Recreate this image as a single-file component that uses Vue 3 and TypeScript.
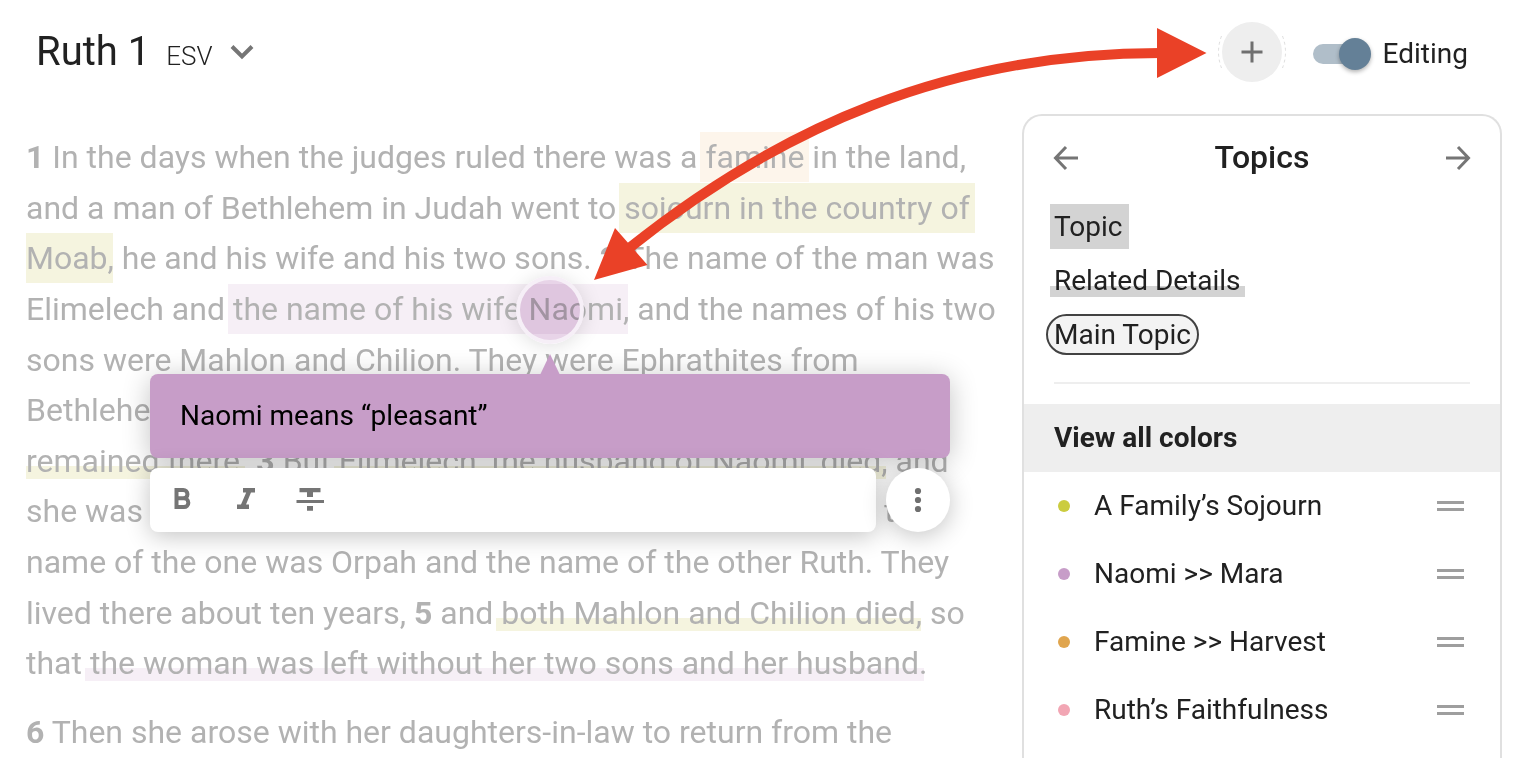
<script setup lang="ts">
import { ref } from 'vue'

type Kind = 'plain' | 'verse' | 'topic' | 'detail'
type Hue = 'olive' | 'orange' | 'purple'

interface Segment {
  text: string
  kind?: Kind
  hue?: Hue
}

type Line = Segment[]

const paragraphs: Line[][] = [
  [
    [
      { text: '1', kind: 'verse' },
      { text: ' In the days when the judges ruled there was a ' },
      { text: 'famine', kind: 'topic', hue: 'orange' },
      { text: ' in the land,' },
    ],
    [
      { text: 'and a man of Bethlehem in Judah went to ' },
      { text: 'sojourn in the country of', kind: 'topic', hue: 'olive' },
    ],
    [
      { text: 'Moab', kind: 'topic', hue: 'olive' },
      { text: ', he and his wife and his two sons. ' },
      { text: '2', kind: 'verse' },
      { text: ' The name of the man was' },
    ],
    [
      { text: 'Elimelech and ' },
      { text: 'the name of his wife Naomi', kind: 'topic', hue: 'purple' },
      { text: ', and the names of his two' },
    ],
    [{ text: 'sons were Mahlon and Chilion. They were Ephrathites from' }],
    [{ text: 'Bethlehem in Judah. They went into the country of Moab and' }],
    [
      { text: 'remained there', kind: 'detail', hue: 'olive' },
      { text: '. ' },
      { text: '3', kind: 'verse' },
      { text: ' But ' },
      { text: 'Elimelech, the husband of Naomi, died', kind: 'detail', hue: 'olive' },
      { text: ', and' },
    ],
    [
      { text: 'she was left with her two sons. ' },
      { text: '4', kind: 'verse' },
      { text: ' These took Moabite wives; the' },
    ],
    [{ text: 'name of the one was Orpah and the name of the other Ruth. They' }],
    [
      { text: 'lived there about ten years, ' },
      { text: '5', kind: 'verse' },
      { text: ' and ' },
      { text: 'both Mahlon and Chilion died', kind: 'detail', hue: 'olive' },
      { text: ', so' },
    ],
    [
      { text: 'that ' },
      { text: 'the woman was left without her two sons and her husband', kind: 'detail', hue: 'purple' },
      { text: '.' },
    ],
  ],
  [
    [
      { text: '6', kind: 'verse' },
      { text: ' Then she arose with her daughters-in-law to return from the' },
    ],
  ],
]

const topics = [
  { name: 'A Family’s Sojourn', tone: 'lime' },
  { name: 'Naomi >> Mara', tone: 'mauve' },
  { name: 'Famine >> Harvest', tone: 'amber' },
  { name: 'Ruth’s Faithfulness', tone: 'pink' },
]

const editing = ref(true)
</script>

<template>
  <div class="page">
    <header class="bar">
      <button class="passage" type="button">
        <span class="book">Ruth 1</span>
        <span class="version">ESV</span>
        <svg class="chevron" width="24" height="16" viewBox="0 0 24 16" aria-hidden="true">
          <path d="M2 2.5 12 12.5 22 2.5" fill="none" stroke="#757575" stroke-width="4" />
        </svg>
      </button>
      <div class="actions">
        <button class="add" type="button" aria-label="Add">
          <svg width="68" height="60" viewBox="0 0 68 60" aria-hidden="true">
            <circle cx="34" cy="30" r="30" fill="#eeeeee" />
            <path d="M34 19.5v21M23.500 30h21" fill="none" stroke="#6f6f6f" stroke-width="3" />
            <path d="M3.500 14Q-2.500 30 3.500 46M64.500 14Q70.500 30 64.500 46" fill="none" stroke="#dedede" stroke-width="1" stroke-dasharray="3 3" />
          </svg>
        </button>
        <label class="switch">
          <input v-model="editing" type="checkbox" />
          <span class="track"></span>
          <span>Editing</span>
        </label>
      </div>
    </header>

    <main class="content">
      <article class="reader">
        <p v-for="(lines, p) in paragraphs" :key="p">
          <span v-for="(line, l) in lines" :key="l" class="line"><span v-for="(seg, s) in line" :key="s" :class="[seg.kind, seg.hue]">{{ seg.text }}</span></span>
        </p>
      </article>

      <aside class="panel">
        <div class="panel-head">
          <button type="button" aria-label="Previous">
            <svg width="28" height="28" viewBox="0 0 28 28" aria-hidden="true">
              <path d="M26 14H4M14 3 3.500 14 14 25" fill="none" stroke="#757575" stroke-width="3" />
            </svg>
          </button>
          <h2>Topics</h2>
          <button type="button" aria-label="Next">
            <svg width="28" height="28" viewBox="0 0 28 28" aria-hidden="true">
              <path d="M2 14h22M14 3l10.500 11L14 25" fill="none" stroke="#757575" stroke-width="3" />
            </svg>
          </button>
        </div>
        <div class="styles">
          <button class="style-topic" type="button">Topic</button>
          <button class="style-detail" type="button">Related Details</button>
          <button class="style-main" type="button">Main Topic</button>
        </div>
        <button class="view-all" type="button">View all colors</button>
        <ul>
          <li v-for="topic in topics" :key="topic.name">
            <span class="dot" :class="topic.tone"></span>
            <span class="name">{{ topic.name }}</span>
            <span class="grip"></span>
          </li>
        </ul>
      </aside>
    </main>

    <div class="marker"><span class="marker-fill"></span></div>

    <div class="note">
      <div class="note-text">Naomi means “pleasant”</div>
      <div class="tools">
        <div class="formats">
          <button type="button" aria-label="Bold">
            <svg width="40" height="40" viewBox="0 0 40 40" aria-hidden="true">
              <path d="M14.500 10h6.800a4 4 0 0 1 0 8.300h-6.800M14.500 18.300h7.500a4.300 4.300 0 0 1 0 8.700h-7.500" fill="none" stroke="#757575" stroke-width="4" />
              <path d="M14.500 8v21" stroke="#757575" stroke-width="4" />
            </svg>
          </button>
          <button type="button" aria-label="Italic">
            <svg width="40" height="40" viewBox="0 0 40 40" aria-hidden="true">
              <path d="M17 8h12v4.500h-4L20 24.500h3v4.500H11v-4.500h4L20.200 12.500H17z" fill="#757575" />
            </svg>
          </button>
          <button type="button" aria-label="Strikethrough">
            <svg width="40" height="40" viewBox="0 0 40 40" aria-hidden="true">
              <path d="M9.500 8h21v4.300h-7.500v4.700h-6v-4.700h-7.500zM6.500 20h27.500v3h-27.500zM17 26h6v4.700h-6z" fill="#757575" />
            </svg>
          </button>
        </div>
        <button class="more" type="button" aria-label="More options">
          <svg width="8" height="26" viewBox="0 0 8 26" aria-hidden="true">
            <g fill="#6f6f6f">
              <circle cx="4" cy="4" r="3.100" />
              <circle cx="4" cy="13" r="3.100" />
              <circle cx="4" cy="22" r="3.100" />
            </g>
          </svg>
        </button>
      </div>
    </div>

    <svg class="arrow" width="640" height="280" viewBox="580 10 640 280" aria-hidden="true">
      <path d="M628 249C780 127 950 53 1160 53" fill="none" stroke="#ea4127" stroke-width="10" />
      <path d="M1157 28v50l49.500-25zM594 280l21-52 32.500 37z" fill="#ea4127" />
    </svg>
  </div>
</template>

<style>
body {
  margin: 0;
  background: #fff;
}
</style>

<style scoped>
* {
  box-sizing: border-box;
}

.page {
  position: relative;
  display: flex;
  flex-direction: column;
  height: 100vh;
  overflow: hidden;
  background: #fff;
  color: #212121;
  font-family: Roboto, "Liberation Sans", sans-serif;
  font-size: 28px;
}

button {
  padding: 0;
  border: 0;
  background: none;
  color: inherit;
  font: inherit;
  cursor: pointer;
}

.bar {
  display: flex;
  justify-content: space-between;
  align-items: center;
  padding: 22px 56px 32px 36px;
}

.passage {
  display: flex;
  align-items: baseline;
}

.book {
  font-size: 40px;
  line-height: 48px;
}

.version {
  margin: 0 18px 0 16px;
  font-size: 26px;
  font-weight: 300;
}

.chevron {
  align-self: center;
}

.actions {
  display: flex;
  align-items: center;
  gap: 27px;
}

.add {
  display: flex;
}

.switch {
  display: flex;
  align-items: center;
  gap: 12px;
  padding-top: 3px;
  cursor: pointer;
}

.switch input {
  position: absolute;
  opacity: 0;
}

.track {
  position: relative;
  width: 58px;
  height: 20px;
  border-radius: 10px;
  background: linear-gradient(#b0bec9, #b0bec9) left / 48px 100% no-repeat;
}

.track::after {
  content: "";
  position: absolute;
  top: -6px;
  left: 0;
  width: 32px;
  height: 32px;
  border-radius: 50%;
  background: #648097;
  box-shadow: 0 2px 4px rgba(0, 0, 0, 0.3);
}

input:checked + .track::after {
  left: 26px;
}

.content {
  display: flex;
  flex: 1;
  min-height: 0;
  padding: 0 22px 0 26px;
}

.reader {
  flex: 1;
  min-width: 0;
  padding-top: 18px;
  color: #b2b2b2;
  font-size: 32px;
  line-height: 1.583;
}

.reader p {
  margin: 0 0 18px;
}

.line {
  display: block;
  white-space: pre;
}

.verse {
  font-weight: 700;
}

.topic,
.detail {
  margin: 0 -5px;
  padding: 6px 5px;
}

.line > .topic:first-child,
.line > .detail:first-child {
  margin-left: 0;
  padding-left: 0;
}

.topic.orange {
  background: #fdf5eb;
}

.topic.olive {
  background: #f5f4df;
}

.topic.purple {
  background: #f6eff6;
}

.detail.olive {
  background: linear-gradient(#f5f4df, #f5f4df) 0 30px / 100% 13px no-repeat;
}

.detail.purple {
  background: linear-gradient(#f6eff6, #f6eff6) 0 30px / 100% 13px no-repeat;
}

.panel {
  width: 480px;
  border: 2px solid #e0e0e0;
  border-bottom: 0;
  border-radius: 20px 20px 0 0;
}

.panel-head {
  display: flex;
  justify-content: space-between;
  align-items: center;
  height: 84px;
  padding: 0 28px;
}

.panel-head button {
  display: flex;
}

h2 {
  margin: 0;
  padding-bottom: 2px;
  font-size: 32px;
  font-weight: 500;
}

.styles {
  display: flex;
  flex-direction: column;
  align-items: flex-start;
  margin: 4px 30px 20px;
  padding-bottom: 27px;
  border-bottom: 2px solid #eeeeee;
}

.styles button {
  margin-left: -4px;
  line-height: 45px;
}

.styles .style-topic {
  padding: 0 6px 0 4px;
  background: #d3d3d3;
}

.styles .style-detail {
  margin-top: 9px;
  padding: 0 4px;
  background: linear-gradient(#d3d3d3, #d3d3d3) 0 28px / 100% 11px no-repeat;
}

.styles .style-main {
  margin: 11px 0 0 -8px;
  padding: 0 6px;
  border: 2px solid #424242;
  border-radius: 21px;
  background: #f3f3f3;
  line-height: 37px;
}

.view-all {
  display: block;
  width: 100%;
  padding: 0 30px;
  background: #eeeeee;
  font-weight: 700;
  line-height: 68px;
  text-align: left;
}

ul {
  margin: 0;
  padding: 0;
  list-style: none;
}

li {
  display: flex;
  align-items: center;
  height: 68px;
  padding: 0 36px 0 34px;
}

.dot {
  width: 12px;
  height: 12px;
  margin-right: 24px;
  border-radius: 50%;
}

.lime {
  background: #cbcc3f;
}

.mauve {
  background: #c79dc8;
}

.amber {
  background: #e0a54e;
}

.pink {
  background: #f2a6b4;
}

.name {
  flex: 1;
  padding-bottom: 2px;
}

.grip {
  width: 27px;
  height: 10px;
  border-top: 3px solid #9e9e9e;
  border-bottom: 3px solid #9e9e9e;
}

.marker {
  position: absolute;
  top: 276px;
  left: 516px;
  width: 68px;
  height: 68px;
  border: 4px solid #f6eff7;
  border-radius: 50%;
  box-shadow: 0 2px 20px rgba(0, 0, 0, 0.13);
}

.marker-fill {
  display: block;
  height: 100%;
  border-radius: 50%;
  background: #e8d4e8;
  mix-blend-mode: multiply;
}

.note {
  position: absolute;
  top: 374px;
  left: 150px;
  width: 800px;
}

.note::before {
  content: "";
  position: absolute;
  top: -20px;
  left: 390px;
  width: 20px;
  height: 21px;
  background: #c79dc8;
  clip-path: polygon(50% 0, 100% 100%, 0 100%);
}

.note-text {
  padding: 0 30px;
  border-radius: 8px;
  background: #c79dc8;
  box-shadow: 0 4px 28px rgba(0, 0, 0, 0.24);
  color: #000;
  line-height: 84px;
}

.tools {
  display: flex;
  gap: 10px;
  margin-top: 10px;
}

.formats {
  display: flex;
  flex: 1;
  align-items: center;
  gap: 24px;
  height: 64px;
  padding: 0 12px;
  border-radius: 8px;
  background: #fff;
  box-shadow: 0 4px 24px rgba(0, 0, 0, 0.24);
}

.formats button {
  display: flex;
}

.more {
  display: flex;
  align-items: center;
  justify-content: center;
  width: 64px;
  height: 64px;
  border-radius: 50%;
  background: #fff;
  box-shadow: 0 4px 24px rgba(0, 0, 0, 0.24);
}

.arrow {
  position: absolute;
  top: 10px;
  left: 580px;
  pointer-events: none;
}
</style>
